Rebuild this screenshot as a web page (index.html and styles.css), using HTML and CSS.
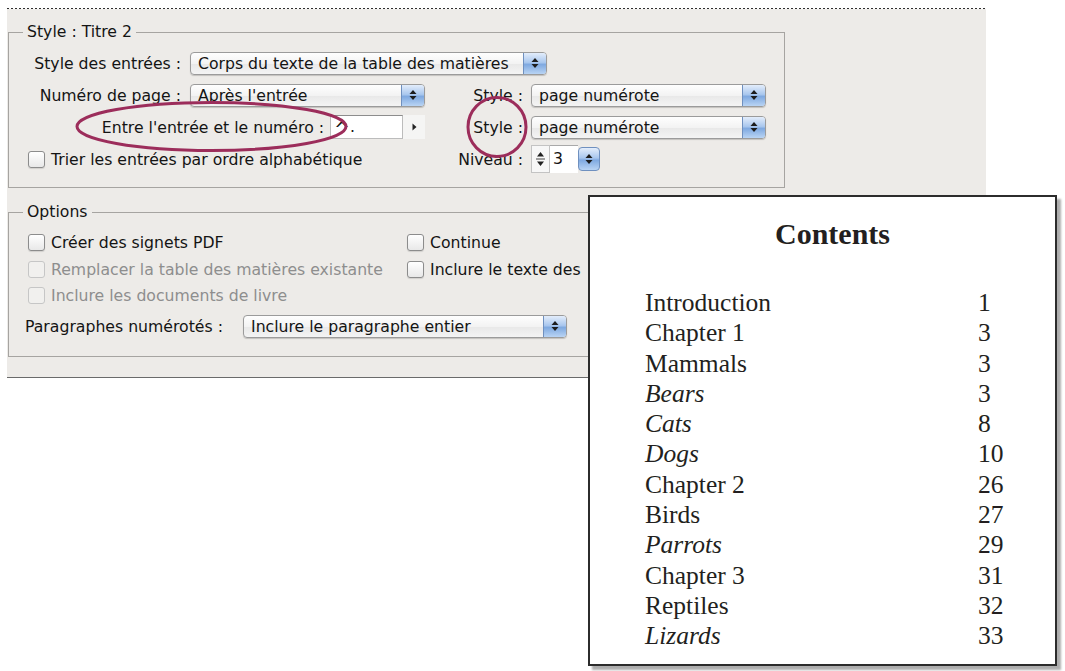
FILE: index.html
```html
<!DOCTYPE html>
<html lang="fr">

<head>
  <meta charset="UTF-8">
  <meta name="viewport" content="width=device-width, initial-scale=1.0">
  <title>Table des matières</title>
  <link rel="stylesheet" href="styles.css">
</head>

<body class="page">
  <div class="dialog">
    <div class="dialog-edge"></div>

    <!-- entry style group -->
    <fieldset class="group group-style">
      <legend class="group-title">Style : Titre 2</legend>

      <div class="row row-1">
        <span class="label label-main">Style des entrées :</span>
        <div class="popup popup-wide">
          <span class="popup-text">Corps du texte de la table des matières</span>
          <span class="popup-arrows"><svg width="8" height="12" viewBox="0 0 8 12"><path d="M4 1L7.5 5H0.5Z M4 11L7.5 7H0.5Z" fill="#1d1d1d"/></svg></span>
        </div>
      </div>

      <div class="row row-2">
        <span class="label label-main">Numéro de page :</span>
        <div class="popup popup-mid">
          <span class="popup-text">Après l'entrée</span>
          <span class="popup-arrows"><svg width="8" height="12" viewBox="0 0 8 12"><path d="M4 1L7.5 5H0.5Z M4 11L7.5 7H0.5Z" fill="#1d1d1d"/></svg></span>
        </div>
        <span class="label label-side">Style :</span>
        <div class="popup popup-mid">
          <span class="popup-text">page numérote</span>
          <span class="popup-arrows"><svg width="8" height="12" viewBox="0 0 8 12"><path d="M4 1L7.5 5H0.5Z M4 11L7.5 7H0.5Z" fill="#1d1d1d"/></svg></span>
        </div>
      </div>

      <div class="row row-3">
        <span class="label label-long">Entre l'entrée et le numéro :</span>
        <span class="field"><span class="caret">^</span>.</span>
        <span class="field-menu"><svg width="5" height="8" viewBox="0 0 5 8"><path d="M0.5 0.5L4.5 4L0.5 7.5Z" fill="#222"/></svg></span>
        <span class="label label-side">Style :</span>
        <div class="popup popup-mid">
          <span class="popup-text">page numérote</span>
          <span class="popup-arrows"><svg width="8" height="12" viewBox="0 0 8 12"><path d="M4 1L7.5 5H0.5Z M4 11L7.5 7H0.5Z" fill="#1d1d1d"/></svg></span>
        </div>
      </div>

      <div class="row row-4">
        <label class="check check-sort">
          <span class="box"></span>
          <span>Trier les entrées par ordre alphabétique</span>
        </label>
        <span class="label label-side">Niveau :</span>
        <div class="level">
          <span class="stepper"><svg width="11" height="18" viewBox="0 0 11 18"><path d="M5.5 2L9 6.5H2Z M5.5 16L9 11.5H2Z" fill="#222"/><path d="M1 9H10" stroke="#444" stroke-width="1"/></svg></span>
          <span class="level-value">3</span>
          <span class="popup-arrows popup-arrows-solo"><svg width="8" height="12" viewBox="0 0 8 12"><path d="M4 1L7.5 5H0.5Z M4 11L7.5 7H0.5Z" fill="#1d1d1d"/></svg></span>
        </div>
      </div>
    </fieldset>

    <!-- options group -->
    <fieldset class="group group-options">
      <legend class="group-title">Options</legend>

      <div class="option-grid">
        <label class="check"><span class="box"></span><span>Créer des signets PDF</span></label>
        <label class="check"><span class="box"></span><span>Continue</span></label>
        <label class="check is-disabled"><span class="box"></span><span>Remplacer la table des matières existante</span></label>
        <label class="check"><span class="box"></span><span>Inclure le texte des</span></label>
        <label class="check is-disabled"><span class="box"></span><span>Inclure les documents de livre</span></label>
      </div>

      <div class="row row-para">
        <span class="label label-para">Paragraphes numérotés :</span>
        <div class="popup popup-para">
          <span class="popup-text">Inclure le paragraphe entier</span>
          <span class="popup-arrows"><svg width="8" height="12" viewBox="0 0 8 12"><path d="M4 1L7.5 5H0.5Z M4 11L7.5 7H0.5Z" fill="#1d1d1d"/></svg></span>
        </div>
      </div>
    </fieldset>
  </div>

  <!-- highlight rings drawn over the dialog -->
  <svg class="marks" width="1065" height="671" viewBox="0 0 1065 671">
    <ellipse cx="211.5" cy="126.5" rx="134.5" ry="24" fill="none" stroke="#9c2d5b" stroke-width="3"/>
    <ellipse cx="497" cy="127" rx="29" ry="29.5" fill="none" stroke="#9c2d5b" stroke-width="3"/>
  </svg>

  <!-- generated table of contents -->
  <div class="toc-sample">
    <h2 class="toc-title">Contents</h2>
    <div class="toc-list">
      <span>Introduction</span><span>1</span>
      <span>Chapter 1</span><span>3</span>
      <span>Mammals</span><span>3</span>
      <span class="toc-sub">Bears</span><span>3</span>
      <span class="toc-sub">Cats</span><span>8</span>
      <span class="toc-sub">Dogs</span><span>10</span>
      <span>Chapter 2</span><span>26</span>
      <span>Birds</span><span>27</span>
      <span class="toc-sub">Parrots</span><span>29</span>
      <span>Chapter 3</span><span>31</span>
      <span>Reptiles</span><span>32</span>
      <span class="toc-sub">Lizards</span><span>33</span>
    </div>
  </div>
</body>

</html>
```

FILE: styles.css
```css
.page {
  margin: 0;
  width: 1065px;
  height: 671px;
  position: relative;
  background-color: #fff;
  font-family: "DejaVu Sans", Verdana, sans-serif;
  font-size: 15.7px;
  color: #141414;
  overflow: hidden;
}

/* dialog panel */
.dialog {
  margin: 8px 0 0 7px;
  width: 979px;
  height: 370px;
  box-sizing: border-box;
  background-color: #edebe8;
  border-bottom: 1px solid #6a6a6a;
}

.dialog-edge {
  height: 1px;
  background: repeating-linear-gradient(90deg, #2e2e2e 0 2px, #fff 2px 4px);
}

.group {
  margin: 0 0 0 1px;
  padding: 10px 0 14px 0;
  width: 777px;
  min-width: 0;
  box-sizing: border-box;
  border: 1px solid #a6a4a1;
}

.group-style {
  margin-top: 14px;
}

.group-options {
  margin-top: 15px;
  padding-top: 11px;
  padding-bottom: 18px;
}

.group-title {
  margin-left: 14px;
  padding: 0 4px;
  line-height: 18px;
}

.row {
  display: flex;
  align-items: center;
  height: 24px;
  white-space: nowrap;
}

.row-2,
.row-3 {
  margin-top: 8px;
}

.row-4 {
  margin-top: 6px;
  height: 28px;
}

.label {
  flex: none;
  text-align: right;
}

.label-main {
  width: 172px;
  margin-right: 9px;
}

.label-long {
  width: 315px;
  margin-right: 6px;
}

.label-side {
  width: 98px;
  margin-right: 8px;
}

.label-para {
  margin-left: 16px;
  width: 218px;
  text-align: left;
}

/* aqua pop-up menus */
.popup {
  flex: none;
  display: flex;
  height: 23px;
  box-sizing: border-box;
  border: 1px solid #9b9b9b;
  border-radius: 4px;
  background: linear-gradient(#fefefe, #f3f3f3 50%, #e8e8e8 51%, #f4f4f4);
  box-shadow: 0 1px 1px rgba(0, 0, 0, 0.18);
  overflow: hidden;
}

.popup-wide {
  width: 357px;
}

.popup-mid {
  width: 235px;
}

.popup-para {
  width: 324px;
}

.popup-text {
  flex: 1;
  padding-left: 7px;
  line-height: 21px;
  overflow: hidden;
}

.popup-arrows {
  flex: none;
  width: 22px;
  display: flex;
  align-items: center;
  justify-content: center;
  background: linear-gradient(#e3edfb, #a9c7ee 45%, #7fa9e0 55%, #b9d4f4);
  border-left: 1px solid #6f90bf;
}

.popup-arrows-solo {
  height: 24px;
  border: 1px solid #6f90bf;
  border-radius: 4px;
  box-sizing: border-box;
}

/* text field with its small menu */
.field {
  flex: none;
  width: 73px;
  height: 24px;
  box-sizing: border-box;
  padding-left: 3px;
  line-height: 22px;
  background-color: #fff;
  border: 1px solid #bcbcbc;
  border-top-color: #8d8d8d;
}

.caret {
  font-size: 19px;
  vertical-align: -4px;
}

.field-menu {
  flex: none;
  width: 22px;
  height: 24px;
  display: flex;
  align-items: center;
  justify-content: center;
  background-color: #f5f5f4;
}

/* level stepper */
.level {
  display: flex;
  align-items: center;
  height: 28px;
}

.stepper {
  width: 19px;
  height: 28px;
  display: flex;
  align-items: center;
  justify-content: center;
  background-color: #f7f7f7;
  border: 1px solid #c3c3c3;
  box-sizing: border-box;
}

.level-value {
  width: 28px;
  height: 28px;
  line-height: 26px;
  box-sizing: border-box;
  padding-left: 3px;
  background-color: #fff;
  border-top: 1px solid #a9a9a9;
}

/* check boxes */
.check {
  display: flex;
  align-items: center;
  gap: 6px;
  height: 20px;
  white-space: nowrap;
}

.check-sort {
  width: 397px;
  margin-left: 19px;
  flex: none;
}

.box {
  flex: none;
  width: 15px;
  height: 15px;
  border: 1px solid #8c8c8c;
  border-radius: 3px;
  background: linear-gradient(#fff, #e8e8e8);
  box-shadow: 0 1px 1px rgba(0, 0, 0, 0.12);
}

.is-disabled {
  color: #8e8e8e;
}

.is-disabled .box {
  border-color: #c6c6c6;
  background: #f1f0ee;
  box-shadow: none;
}

.option-grid {
  display: grid;
  grid-template-columns: 379px auto;
  row-gap: 7px;
  margin-left: 19px;
}

.option-grid .check:nth-child(5) {
  margin-top: -1px;
}

.row-para {
  margin-top: 9px;
}

/* rings */
.marks {
  position: absolute;
  left: 0;
  top: 0;
  pointer-events: none;
}

/* sample table of contents */
.toc-sample {
  position: absolute;
  left: 588px;
  top: 195px;
  width: 469px;
  height: 471px;
  box-sizing: border-box;
  background-color: #fff;
  border: 2px solid #2c2c2c;
  box-shadow: 4px 4px 2px rgba(0, 0, 0, 0.32);
  font-family: "Liberation Serif", "Times New Roman", serif;
  color: #231f20;
}

.toc-title {
  margin: 19px 0 0 0;
  padding-left: 20px;
  text-align: center;
  font-size: 30px;
  line-height: 36px;
  font-weight: bold;
}

.toc-list {
  display: grid;
  grid-template-columns: 333px auto;
  margin: 36px 0 0 55px;
  font-size: 25.5px;
  line-height: 30.3px;
}

.toc-sub {
  font-style: italic;
}
```
